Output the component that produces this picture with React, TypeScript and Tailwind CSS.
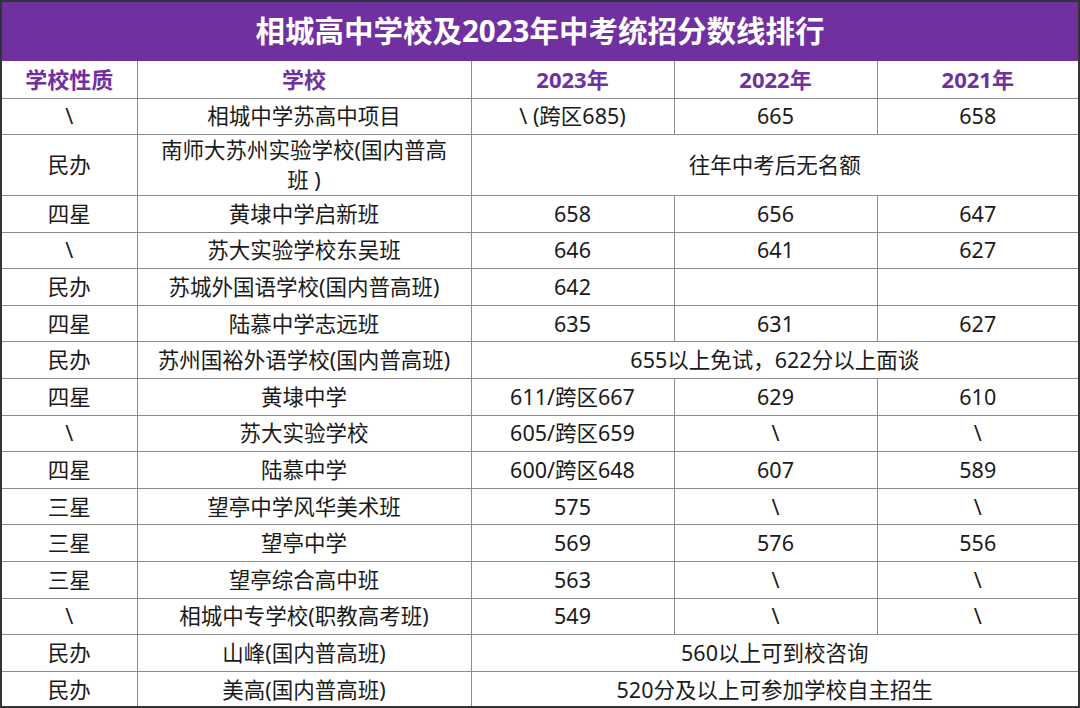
type Row = {
  kind: string;
  name: React.ReactNode;
  cells: string[];
  span?: boolean;
  tall?: boolean;
};

const rows: Row[] = [
  { kind: "\\", name: "相城中学苏高中项目", cells: ["\\ (跨区685)", "665", "658"] },
  {
    kind: "民办",
    name: (
      <>
        南师大苏州实验学校(国内普高
        <br />班 )
      </>
    ),
    cells: ["往年中考后无名额"],
    span: true,
    tall: true,
  },
  { kind: "四星", name: "黄埭中学启新班", cells: ["658", "656", "647"] },
  { kind: "\\", name: "苏大实验学校东吴班", cells: ["646", "641", "627"] },
  { kind: "民办", name: "苏城外国语学校(国内普高班)", cells: ["642", "", ""] },
  { kind: "四星", name: "陆慕中学志远班", cells: ["635", "631", "627"] },
  { kind: "民办", name: "苏州国裕外语学校(国内普高班)", cells: ["655以上免试，622分以上面谈"], span: true },
  { kind: "四星", name: "黄埭中学", cells: ["611/跨区667", "629", "610"] },
  { kind: "\\", name: "苏大实验学校", cells: ["605/跨区659", "\\", "\\"] },
  { kind: "四星", name: "陆慕中学", cells: ["600/跨区648", "607", "589"] },
  { kind: "三星", name: "望亭中学风华美术班", cells: ["575", "\\", "\\"] },
  { kind: "三星", name: "望亭中学", cells: ["569", "576", "556"] },
  { kind: "三星", name: "望亭综合高中班", cells: ["563", "\\", "\\"] },
  { kind: "\\", name: "相城中专学校(职教高考班)", cells: ["549", "\\", "\\"] },
  { kind: "民办", name: "山峰(国内普高班)", cells: ["560以上可到校咨询"], span: true },
  { kind: "民办", name: "美高(国内普高班)", cells: ["520分及以上可参加学校自主招生"], span: true },
];

const td = "border border-[#8c8c8c] p-0 text-center align-middle";

export default function App() {
  return (
    <div
      className="w-[1080px] h-[708px] overflow-hidden border-2 border-[#333333] bg-white text-[#1a1a1a]"
      style={{ fontFamily: '"Noto Sans", "Noto Sans CJK SC", sans-serif' }}
    >
      <div className="flex h-[59px] items-center justify-center bg-[#7030a0] text-[29.5px] font-bold text-white">
        相城高中学校及2023年中考统招分数线排行
      </div>
      <table className="w-full table-fixed border-collapse text-[21.5px] leading-[28px]">
        <colgroup>
          <col className="w-[135px]" />
          <col className="w-[334px]" />
          <col className="w-[203px]" />
          <col className="w-[203px]" />
          <col />
        </colgroup>
        <thead>
          <tr className="h-[37px] text-[22px] font-bold text-[#7030a0]">
            <td className={td + " border-t-0 border-l-0"}>学校性质</td>
            <td className={td + " border-t-0"}>学校</td>
            <td className={td + " border-t-0"}>2023年</td>
            <td className={td + " border-t-0"}>2022年</td>
            <td className={td + " border-t-0 border-r-0"}>2021年</td>
          </tr>
        </thead>
        <tbody>
          {rows.map((r, i) => (
            <tr key={i} className={r.tall ? "h-[61px]" : "h-[36.6px]"}>
              <td className={td + " border-l-0"}>{r.kind}</td>
              <td className={td + (r.tall ? " leading-[30px]" : "")}>{r.name}</td>
              {r.span ? (
                <td colSpan={3} className={td + " border-r-0"}>
                  {r.cells[0]}
                </td>
              ) : (
                r.cells.map((c, j) => (
                  <td key={j} className={td + (j === 2 ? " border-r-0" : "")}>
                    {c}
                  </td>
                ))
              )}
            </tr>
          ))}
        </tbody>
      </table>
    </div>
  );
}
